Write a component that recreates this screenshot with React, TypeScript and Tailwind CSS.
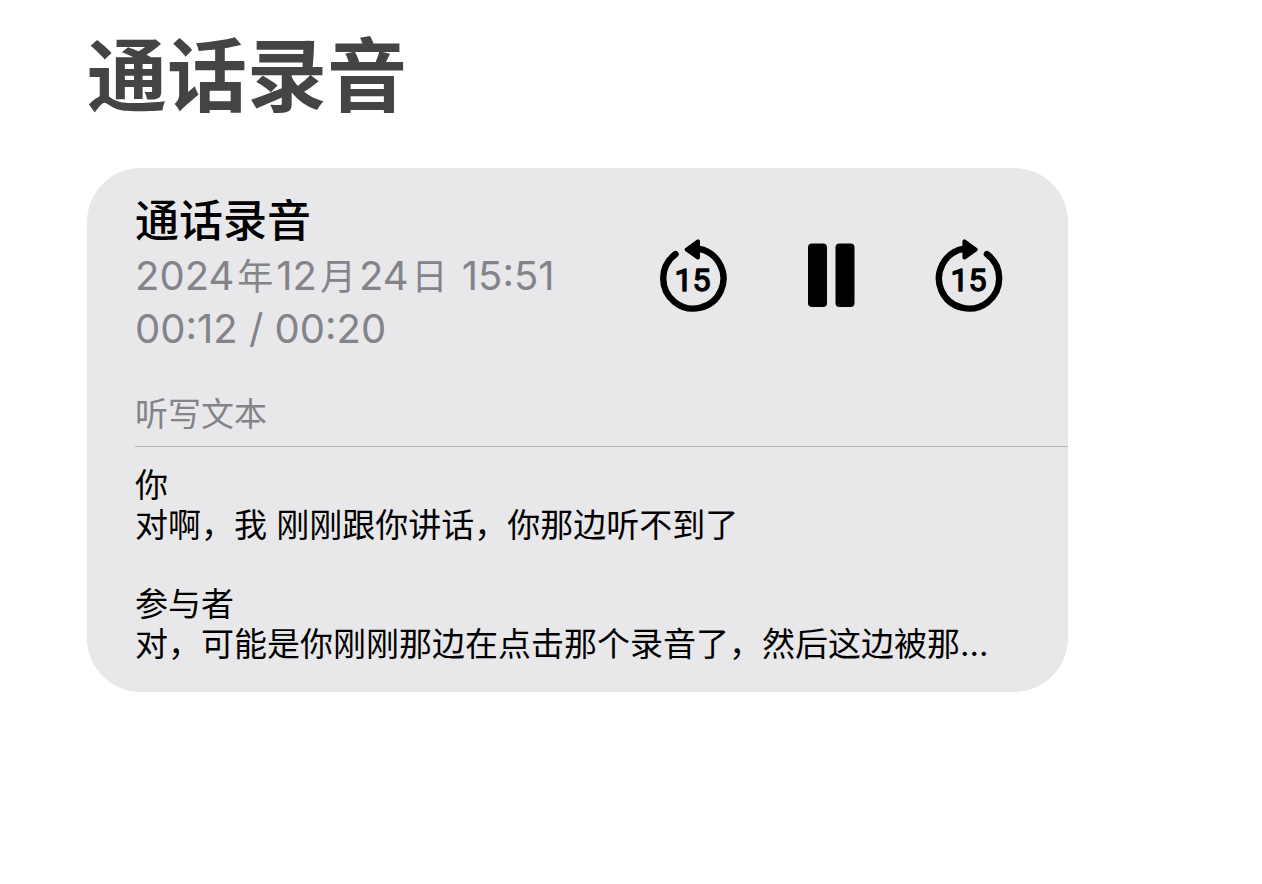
import React from 'react';

interface TranscriptEntry {
  speaker: string;
  text: string;
}

const recording = {
  title: '通话录音',
  year: 2024,
  month: 12,
  day: 24,
  time: '15:51',
  elapsed: '00:12',
  duration: '00:20',
};

const transcript: TranscriptEntry[] = [
  { speaker: '你', text: '对啊，我 刚刚跟你讲话，你那边听不到了' },
  { speaker: '参与者', text: '对，可能是你刚刚那边在点击那个录音了，然后这边被那…' },
];

interface SkipButtonProps {
  direction: 'back' | 'forward';
  label: string;
}

const SkipButton: React.FC<SkipButtonProps> = ({ direction, label }) => (
  <button type="button" aria-label={label} className="h-[74px] w-[68px] shrink-0 cursor-pointer">
    <svg viewBox="0 0 68 74" className="h-full w-full overflow-visible">
      {/* The ring and arrow are mirrored for the forward button, the number is not */}
      <g
        transform={direction === 'forward' ? 'translate(68.4 0) scale(-1 1)' : undefined}
        stroke="currentColor"
        strokeLinecap="round"
        strokeLinejoin="round"
      >
        <path d="M16.5 15.2 A30.1 30.1 0 1 0 39 9.7" fill="none" strokeWidth="6.4" />
        <path d="M27.7 10.5 L39 2.3 V18.6 Z" fill="currentColor" strokeWidth="4" />
      </g>
      <text
        x="33.4"
        y="51.5"
        textAnchor="middle"
        fill="currentColor"
        stroke="currentColor"
        strokeWidth="1.4"
        strokeLinejoin="round"
        className="font-['Roboto',sans-serif] text-[32px] font-normal"
      >
        15
      </text>
    </svg>
  </button>
);

const PauseButton: React.FC = () => (
  <button type="button" aria-label="暂停" className="h-[74px] w-[68px] shrink-0 cursor-pointer">
    <svg viewBox="0 0 68 74" className="h-full w-full" fill="currentColor">
      <rect x="11" y="4.5" width="19" height="63.5" rx="4" />
      <rect x="38.5" y="4.5" width="19" height="63.5" rx="4" />
    </svg>
  </button>
);

const DateUnit: React.FC<{ children: React.ReactNode }> = ({ children }) => (
  <span className="mx-[3px] text-[36px] leading-none">{children}</span>
);

const RecordingCard: React.FC = () => (
  <section className="mt-12 max-w-[981px] overflow-hidden rounded-[54px] bg-[#e8e8ea] pt-[25px] pb-7 pl-12 text-black">
    <div className="flex items-start justify-between pr-[65px]">
      <div>
        <h2 className="text-[44px] leading-[56px] font-medium">{recording.title}</h2>
        <div className="text-[40px] leading-[53px] text-[#848389]">
          <p>
            {recording.year}
            <DateUnit>年</DateUnit>
            {recording.month}
            <DateUnit>月</DateUnit>
            {recording.day}
            <DateUnit>日</DateUnit> {recording.time}
          </p>
          <p>
            {recording.elapsed} / {recording.duration}
          </p>
        </div>
      </div>
      <div className="mt-[46px] flex gap-[70px]">
        <SkipButton direction="back" label="后退15秒" />
        <PauseButton />
        <SkipButton direction="forward" label="前进15秒" />
      </div>
    </div>

    <h3 className="mt-[39px] border-b border-[#b4b4b7] pb-3 text-[33px] leading-10 text-[#848389]">听写文本</h3>

    <div className="mt-[18px] space-y-[39px] pr-12 text-[33px] leading-10">
      {transcript.map(entry => (
        <div key={entry.speaker}>
          <p>{entry.speaker}</p>
          <p>{entry.text}</p>
        </div>
      ))}
    </div>
  </section>
);

export default function App() {
  return (
    <main
      lang="zh-CN"
      className="min-h-screen bg-white pt-8 pr-12 pb-12 pl-[87px] font-['Inter','Noto_Sans_CJK_SC',sans-serif]"
    >
      <h1 className="text-[80px] leading-[88px] font-bold text-[#444444]">通话录音</h1>
      <RecordingCard />
    </main>
  );
}
